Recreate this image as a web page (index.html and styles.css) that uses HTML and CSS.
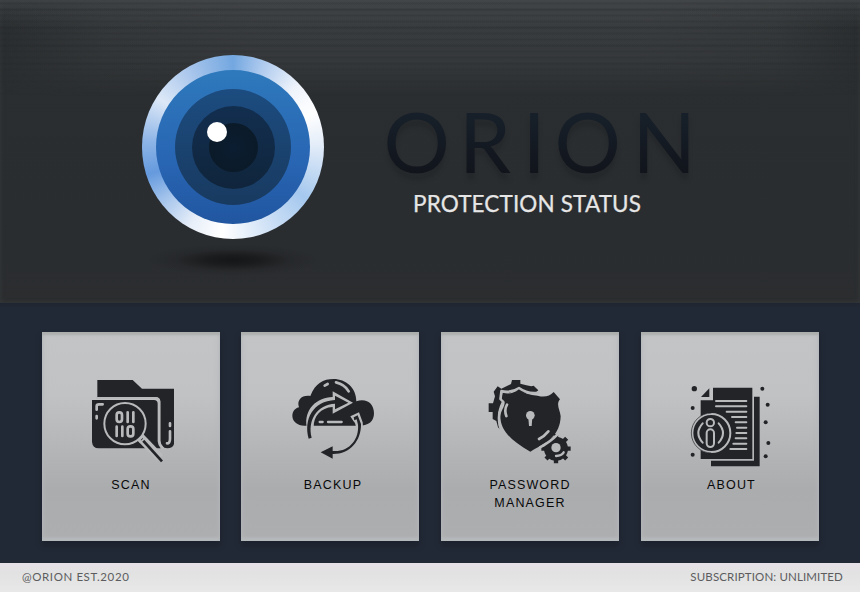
FILE: index.html
```html
<!DOCTYPE html>
<html lang="en">
<head>
<meta charset="utf-8">
<title>Orion</title>
<link rel="stylesheet" href="styles.css">
</head>
<body>
<main class="app">
  <header class="hero">
    <div class="eye">
      <div class="ring"><div class="iris"><div class="mid"><div class="inner"><div class="pupil"></div></div></div></div><div class="glint"></div></div>
      <div class="eye-shadow"></div>
    </div>
    <div class="brand">
      <svg class="wordmark" width="340" height="114" viewBox="380 76 340 114">
        <defs><linearGradient id="ink" gradientUnits="userSpaceOnUse" x1="0" y1="113" x2="0" y2="174"><stop offset="0" stop-color="#17202a"/><stop offset="1" stop-color="#11141b"/></linearGradient></defs>
        <text class="logo-text" x="383.5 459 522.5 554.5 632.5" y="173" fill="url(#ink)">ORION</text>
      </svg>
      <svg class="subtitle" width="240" height="30" viewBox="408 190 240 30"><text class="status-text" x="413" y="212" textLength="228">PROTECTION STATUS</text></svg>
    </div>
  </header>

  <nav class="tiles">
    <a class="tile">
      <svg class="icon" viewBox="-3 0 312 300">
        <path d="M52 30H158L186 56H282V222Q278 235 262 235Q242 233 241 215V94Q240 83 228 82H52Z"/>
        <path d="M36 90H222Q233 90 233 101V214Q234 227 242 235H56Q38 235 36 216Z"/>
        <path class="line" d="M50 84H226Q238 84 238 96V212Q239 226 249 234" stroke-width="6"/>
        <path class="line" d="M50 119V109Q50 103 57 103H68M50 138V145M270 160V168M270 184V206Q270 220 261 220" stroke-width="8"/>
        <path class="cut" d="M178 199L240 263" stroke-width="26"/>
        <path class="bar" d="M185 207L246 274" stroke-width="8"/>
        <path class="line" d="M171 205L183 195L193 206L181 217Z" stroke-width="5"/>
        <circle cx="135" cy="161" r="62" stroke="#b9babb" stroke-width="6"/>
        <g class="line" stroke-width="8"><rect x="110" y="127" width="16" height="29" rx="8"/><path d="M143 127V156M160 127V156M110 170V198M127 170V198"/><rect x="143" y="169" width="17" height="30" rx="8"/></g>
      </svg>
      <span class="label">SCAN</span>
    </a>
    <a class="tile">
      <svg class="icon" viewBox="-6 0 312 300">
        <path d="M73 167C30 167 27 119 57 112C49 89 67 74 91 78C107 39 129 27 161 27C197 27 229 53 229 94C260 84 282 101 282 130C282 154 266 167 239 167Z"/>
        <path class="line" d="M134 47L143 42M168 37Q194 43 206 64" stroke-width="8"/>
        <path class="line" d="M119 156H128M144 156H185" stroke-width="7"/>
        <path class="light" d="M80 170C72 120 108 82 158 81V64L219 98L158 131V111C122 113 101 139 101 170Z"/>
        <path d="M86 206C70 148 99 93 165 90V77L205 98L165 118V101C111 103 82 151 95 203Z"/>
        <path class="light" d="M211 139L237 127L248 157L249 172H227C228 164 225 157 220 153Z"/>
        <path d="M221 142L233 136L243 162C244 213 209 253 158 252V266L122 247L158 229V243C208 247 238 207 234 164L230 148L223 151Z"/>
      </svg>
      <span class="label backup">BACKUP</span>
    </a>
    <a class="tile">
      <svg class="icon" viewBox="0 0 312 300">
        <path d="M102 30H127V41L145 46L160 49L167 47L181 61L172 68H142L113 60L96 68L70 63L67 88L74 94L60 130L68 180L60 172L55 153L44 147V126H32V100H45L51 79L47 65L59 49L70 56L99 42Z"/>
        <path d="M74 68Q101 76 124 57Q143 75 179 77Q208 86 227 66L246 88C233 104 246 119 248 139C246 197 209 216 157 245C97 211 67 180 67 139C68 121 81 111 80 95L71 88Z"/>
        <path class="line" d="M181 68Q149 73 123 54Q99 70 70 63L67 87L75 95C60 125 57 151 70 185" stroke-width="7"/>
        <path class="line" d="M87 104Q78 119 85 138M183 207Q200 198 211 184" stroke-width="8"/>
        <circle cx="157" cy="136" r="13" class="light"/><path class="light" d="M151 143H163L161 168H153Z"/>
        <path class="bar" d="M234 192V280M190 236H278M204 205L266 267M204 267L266 205" stroke-width="13"/>
        <circle cx="234" cy="236" r="36"/>
        <path class="line" d="M186 232Q216 217 241 191" stroke-width="8"/>
        <circle class="light" cx="234" cy="233" r="14"/>
        <path class="line" d="M234 258Q251 257 257 247" stroke-width="7"/>
      </svg>
      <span class="label">PASSWORD<br>MANAGER</span>
    </a>
    <a class="tile">
      <svg class="icon" viewBox="-6 -15 312 300">
        <path d="M222 65H239V274H93V257H222Z"/>
        <path d="M99 38H217V252H62V76H99Z"/><path d="M88 40V66H63Z"/>
        <path class="line" d="M108 78H199M108 94H199M140 110H199M156 126H199M167 142H199M171 158H199M169 174H199M167 190H199M160 206H199M151 222H199" stroke-width="6"/>
        <circle cx="94" cy="174" r="57" stroke="#b9babb" stroke-width="6"/>
        <circle cx="94" cy="174" r="60" fill="none" stroke="#222428" stroke-width="2" stroke-dasharray="188 189" transform="rotate(90 94 174)"/>
        <g class="line" stroke-width="6"><circle cx="91" cy="143" r="11"/><rect x="80" y="163" width="22" height="53" rx="11"/><path d="M68 145Q42 174 68 203M116 145Q142 174 116 203"/></g>
        <circle cx="43" cy="41" r="8"/><circle cx="38" cy="99" r="6"/><circle cx="38" cy="239" r="6"/><circle cx="247" cy="41" r="6"/><circle cx="263" cy="89" r="6"/><circle cx="257" cy="142" r="6"/><circle cx="265" cy="204" r="6"/><circle cx="257" cy="244" r="6"/>
      </svg>
      <span class="label about">ABOUT</span>
    </a>
  </nav>

  <footer class="footer"><span>@ORION EST.2020</span><span class="plan">SUBSCRIPTION: UNLIMITED</span></footer>
</main>
</body>
</html>
```
FILE: styles.css
```css
* { box-sizing: border-box; }
body { margin: 0; }
.app { width: 860px; height: 592px; display: grid; grid-template-rows: 303px 260px 29px; background: #222936; overflow: hidden; }

.hero {
  position: relative;
  display: flex;
  background: linear-gradient(#2b2e30, #2a2d30 80%, #2b2d2f);
  box-shadow: inset 0 0 5px #363a3c;
}
.hero::before {
  content: "";
  position: absolute;
  inset: 0 0 auto;
  height: 96px;
  background:
    repeating-linear-gradient(transparent 0 2px, rgba(28,32,34,.16) 3px 4px, transparent 5px 6px),
    repeating-linear-gradient(transparent 0 8px, rgba(28,32,34,.14) 10px, transparent 12px 18px),
    linear-gradient(90deg, rgba(66,70,72,0), rgba(66,70,72,.5) 12%, rgba(70,73,76,.65) 30% 75%, rgba(66,70,72,.55) 90%, rgba(66,70,72,0)),
    linear-gradient(rgba(72,76,79,.55), transparent 30%);
  -webkit-mask-image: linear-gradient(#000, rgba(0,0,0,.6) 65%, transparent);
  mask-image: linear-gradient(#000, rgba(0,0,0,.6) 65%, transparent);
}
.eye { position: relative; width: 182px; margin: 55px 0 0 142px; }
.ring {
  position: relative;
  width: 182px; height: 184px;
  border-radius: 50%;
  display: grid; place-items: center;
  background: conic-gradient(#73a7e0 0deg, #a9c7ed 18deg, #eef3fb 46deg, #fff 67deg, #e4edf9 88deg, #a5c8ee 125deg, #cadef5 152deg, #fff 187deg, #e8eff9 208deg, #a6c5ec 232deg, #659ade 252deg, #8eb5e7 274deg, #dce8f7 303deg, #a9c6ec 330deg, #73a7e0 360deg);
}
.ring div { border-radius: 50%; display: grid; place-items: center; }
.iris { width: 154px; height: 154px; background: linear-gradient(#2e79bc, #2865b3 60%, #2156a0); }
.mid { width: 116px; height: 116px; background: linear-gradient(#1c4c80, #183a60); }
.inner { width: 83px; height: 83px; background: linear-gradient(#122e4f, #10253c); }
.pupil { width: 49px; height: 49px; background: radial-gradient(#0b1d31, #0b1925); }
.ring .glint { position: absolute; left: 65px; top: 67px; width: 20px; height: 20px; background: #fff; }
.eye-shadow { width: 176px; height: 32px; margin: 5px 0 0 3px; background: radial-gradient(closest-side, #151617, rgba(21,22,23,.75) 30%, rgba(21,22,23,.2) 65%, transparent); }
.brand { position: relative; margin: 76px 0 0 56px; }
.wordmark, .subtitle { display: block; }
.subtitle { margin-left: 28px; }
.logo-text { font: 400 83px Lato, sans-serif; filter: drop-shadow(0 7px 2px rgba(15,18,22,.22)); }
.status-text { font: 400 22.5px Lato, sans-serif; fill: #e6e6e6; stroke: #e6e6e6; stroke-width: .25px; }

.tiles { display: grid; grid-template-columns: 199px 200px 200px 178px; padding: 29px 0 22px 42px; background: linear-gradient(#1f2631, #222936 5px); }
.tile {
  width: 178px; height: 209px; padding-top: 38px;
  display: flex; flex-direction: column; align-items: center;
  background: linear-gradient(#c3c4c6, #c1c2c4 30%, #abacae 75%, #adaeb0);
  box-shadow: inset 0 4px 2px -1px #adafae, inset 0 0 6px #b0b4b6, inset 0 -3px 3px #bbbec0, 0 4px 6px rgba(20,25,33,.45);
}
.icon { width: 104px; height: 100px; flex: none; fill: #222428; }
.line, .cut, .bar { fill: none; stroke: #b9babb; stroke-linecap: round; stroke-linejoin: round; }
.cut { stroke-linecap: butt; }
.bar { stroke: #222428; stroke-linecap: butt; }
.light { fill: #b9babb; }
.label { margin: 6px 0 0; font: 400 12.5px/18px "Liberation Sans", sans-serif; letter-spacing: 1.15px; text-align: center; color: #08090a; }
.backup { margin-left: 6px; }
.about { margin-left: 3px; }

.footer { display: flex; justify-content: space-between; padding: 0 17px 0 22px; background: linear-gradient(#e6e0e8, #e2e2e2 35%, #e8e8e8); font: 400 11.5px/28px Lato, sans-serif; letter-spacing: .6px; color: #5c5c5e; }
.plan { letter-spacing: .13px; }
```
